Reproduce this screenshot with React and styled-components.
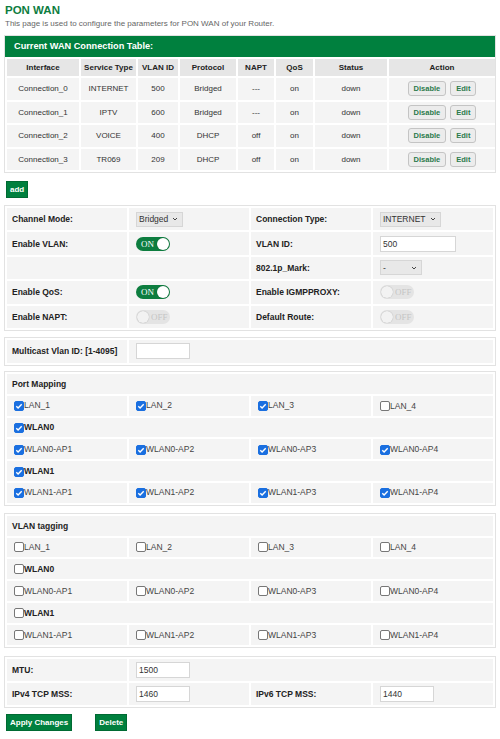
import styled, { createGlobalStyle } from "styled-components";

const GlobalStyle = createGlobalStyle`
  body {
    margin: 0;
    background: #fff;
    font-family: "Liberation Sans", Arial, sans-serif;
    color: #333;
  }
`;

const Page = styled.div`
  padding: 3px 4px 8px 4px;
`;

const Title = styled.h1`
  margin: 0 0 0 1px;
  font-size: 11.5px;
  font-weight: bold;
  color: #0d7d3f;
  line-height: 14px;
`;

const Intro = styled.p`
  margin: 1px 0 0 1px;
  font-size: 8px;
  color: #666;
  line-height: 11px;
`;

const Box = styled.div`
  border: 1px solid #e2e2e2;
  margin-top: ${(p) => p.$mt || 6}px;
`;

const BoxHead = styled.div`
  background: #00803e;
  color: #fff;
  font-weight: bold;
  font-size: 9.2px;
  height: 21px;
  line-height: 21px;
  padding-left: 9px;
`;

const Grid = styled.table`
  width: 100%;
  border-spacing: 2px;
  table-layout: fixed;
  font-size: 8px;
`;

const Th = styled.th`
  background: #e6e6e6;
  font-weight: bold;
  font-size: 8px;
  color: #222;
  height: 17px;
  padding: 0;
  width: ${(p) => p.$w}px;
`;

const Td = styled.td`
  background: #f4f4f4;
  text-align: center;
  height: 21.5px;
  padding: 0;
  color: #333;
`;

const SmallBtn = styled.button`
  font-family: "Liberation Sans", Arial, sans-serif;
  font-size: 7.5px;
  font-weight: bold;
  color: #2b7a4b;
  background: #ececec;
  border: 1px solid #c4c4c4;
  border-radius: 3px;
  height: 15px;
  padding: 0 5px;
  margin: 0 2px;
  vertical-align: middle;
`;

const GreenBtn = styled.button`
  font-family: "Liberation Sans", Arial, sans-serif;
  font-size: 8px;
  font-weight: bold;
  color: #fff;
  background: #00803e;
  border: 1px solid #006a33;
  height: 17px;
  padding: 0 3px;
  margin-right: ${(p) => p.$mr || 0}px;
`;

const BtnRow = styled.div`
  margin-top: ${(p) => p.$mt || 6}px;
  padding-left: 2px;
  display: flex;
`;

const Label = styled.td`
  background: #f4f4f4;
  font-weight: bold;
  color: #222;
  height: ${(p) => p.$h || 22.4}px;
  padding: 0 0 0 5px;
  font-size: 8.5px;
`;

const Cell = styled.td`
  background: #f4f4f4;
  height: ${(p) => p.$h || 22.4}px;
  padding: 0 0 0 7px;
  font-size: 8px;
  color: #333;
`;

const Select = styled.div`
  display: inline-flex;
  align-items: center;
  justify-content: space-between;
  gap: 4px;
  background: #e8e8e8;
  border: 1px solid #d6d6d6;
  height: 15px;
  padding: 0 4px 0 2px;
  min-width: ${(p) => p.$w || 0}px;
  box-sizing: border-box;
  font-size: 8.5px;
  color: #333;
  vertical-align: middle;
`;

const Input = styled.div`
  display: inline-block;
  box-sizing: border-box;
  background: #fff;
  border: 1px solid #d6d6d6;
  width: ${(p) => p.$w || 76}px;
  height: 16px;
  line-height: 14px;
  padding-left: 2px;
  font-size: 8.5px;
  color: #333;
  vertical-align: middle;
`;

const Toggle = styled.div`
  position: relative;
  width: 34px;
  height: 14px;
  border-radius: 7px;
  background: ${(p) => (p.$on ? "#0d7d3f" : "#e4e4e4")};
  font-family: "Liberation Serif", "Times New Roman", serif;
  font-size: 9px;
  color: ${(p) => (p.$on ? "#fff" : "#c4c4c4")};
  line-height: 14px;
  box-sizing: border-box;
  padding-left: ${(p) => (p.$on ? 5 : 15)}px;
`;

const Knob = styled.span`
  position: absolute;
  top: 1px;
  ${(p) => (p.$on ? "right: 1px;" : "left: 1px;")}
  width: 12px;
  height: 12px;
  border-radius: 50%;
  background: ${(p) => (p.$on ? "#fff" : "#f2f2f2")};
  box-shadow: 0 0 1px rgba(0, 0, 0, 0.3);
`;

const Check = styled.span`
  display: inline-flex;
  align-items: center;
  justify-content: center;
  width: 10px;
  height: 10px;
  box-sizing: border-box;
  border-radius: 2px;
  background: ${(p) => (p.$on ? "#1a6fe0" : "#fff")};
  border: 1px solid ${(p) => (p.$on ? "#1a6fe0" : "#777")};
  vertical-align: -2px;
`;

const CheckText = styled.span`
  font-size: 8.5px;
  font-weight: ${(p) => (p.$bold ? "bold" : "normal")};
  color: ${(p) => (p.$bold ? "#222" : "#444")};
`;

const Chevron = () => (
  <svg width="6" height="4" viewBox="0 0 6 4">
    <path d="M1 1l2 2 2-2" stroke="#444" strokeWidth="1" fill="none" />
  </svg>
);

const Tick = () => (
  <svg width="8" height="8" viewBox="0 0 8 8">
    <path d="M1.3 4.2l1.8 1.8 3.6-3.8" stroke="#fff" strokeWidth="1.4" fill="none" />
  </svg>
);

const Switch = ({ on }) => (
  <Toggle $on={on}>
    {on ? "ON" : "OFF"}
    <Knob $on={on} />
  </Toggle>
);

const CheckItem = ({ on, label, bold }) => (
  <>
    <Check $on={on}>{on && <Tick />}</Check>
    <CheckText $bold={bold}>{label}</CheckText>
  </>
);

const connections = [
  ["Connection_0", "INTERNET", "500", "Bridged", "---", "on", "down"],
  ["Connection_1", "IPTV", "600", "Bridged", "---", "on", "down"],
  ["Connection_2", "VOICE", "400", "DHCP", "off", "on", "down"],
  ["Connection_3", "TR069", "209", "DHCP", "off", "on", "down"],
];

const heads = [
  ["Interface", 72],
  ["Service Type", 55],
  ["VLAN ID", 40],
  ["Protocol", 56],
  ["NAPT", 36],
  ["QoS", 37],
  ["Status", 72],
  ["Action", 106],
];

const CheckGrid = ({ title, checked, mt }) => {
  const groups = [
    { items: ["LAN_1", "LAN_2", "LAN_3", "LAN_4"], on: checked.lan },
    { head: "WLAN0", items: ["WLAN0-AP1", "WLAN0-AP2", "WLAN0-AP3", "WLAN0-AP4"], on: checked.w0 },
    { head: "WLAN1", items: ["WLAN1-AP1", "WLAN1-AP2", "WLAN1-AP3", "WLAN1-AP4"], on: checked.w1 },
  ];
  const rows = [];
  groups.forEach((g) => {
    if (g.head) {
      rows.push(
        <tr key={g.head}>
          <Cell colSpan={4} $h={19.8}>
            <CheckItem on={g.on[4]} label={g.head} bold />
          </Cell>
        </tr>
      );
    }
    rows.push(
      <tr key={g.items[0]}>
        {g.items.map((it, i) => (
          <Cell key={it} $h={19.8}>
            <CheckItem on={g.on[i]} label={it} />
          </Cell>
        ))}
      </tr>
    );
  });
  return (
    <Box $mt={mt}>
      <Grid>
        <tbody>
          <tr>
            <Label colSpan={4} $h={19.8}>{title}</Label>
          </tr>
          {rows}
        </tbody>
      </Grid>
    </Box>
  );
};

export default function App() {
  return (
    <>
      <GlobalStyle />
      <Page>
        <Title>PON WAN</Title>
        <Intro>This page is used to configure the parameters for PON WAN of your Router.</Intro>

        <Box $mt={6}>
          <BoxHead>Current WAN Connection Table:</BoxHead>
          <Grid>
            <thead>
              <tr>
                {heads.map(([h, w]) => (
                  <Th key={h} $w={w}>{h}</Th>
                ))}
              </tr>
            </thead>
            <tbody>
              {connections.map((row) => (
                <tr key={row[0]}>
                  {row.map((c, i) => (
                    <Td key={i}>{c}</Td>
                  ))}
                  <Td>
                    <SmallBtn>Disable</SmallBtn>
                    <SmallBtn>Edit</SmallBtn>
                  </Td>
                </tr>
              ))}
            </tbody>
          </Grid>
        </Box>

        <BtnRow $mt={8}>
          <GreenBtn>add</GreenBtn>
        </BtnRow>

        <Box $mt={7}>
          <Grid>
            <tbody>
              <tr>
                <Label>Channel Mode:</Label>
                <Cell>
                  <Select>Bridged <Chevron /></Select>
                </Cell>
                <Label>Connection Type:</Label>
                <Cell>
                  <Select>INTERNET <Chevron /></Select>
                </Cell>
              </tr>
              <tr>
                <Label>Enable VLAN:</Label>
                <Cell><Switch on /></Cell>
                <Label>VLAN ID:</Label>
                <Cell><Input $w={76}>500</Input></Cell>
              </tr>
              <tr>
                <Label></Label>
                <Cell></Cell>
                <Label>802.1p_Mark:</Label>
                <Cell>
                  <Select $w={42}>- <Chevron /></Select>
                </Cell>
              </tr>
              <tr>
                <Label>Enable QoS:</Label>
                <Cell><Switch on /></Cell>
                <Label>Enable IGMPPROXY:</Label>
                <Cell><Switch /></Cell>
              </tr>
              <tr>
                <Label>Enable NAPT:</Label>
                <Cell><Switch /></Cell>
                <Label>Default Route:</Label>
                <Cell><Switch /></Cell>
              </tr>
            </tbody>
          </Grid>
        </Box>

        <Box $mt={6}>
          <Grid>
            <tbody>
              <tr>
                <Label $h={23}>Multicast Vlan ID: [1-4095]</Label>
                <Cell colSpan={3} $h={23}><Input $w={54} /></Cell>
              </tr>
            </tbody>
          </Grid>
        </Box>

        <CheckGrid
          mt={5}
          title="Port Mapping"
          checked={{
            lan: [true, true, true, false],
            w0: [true, true, true, true, true],
            w1: [true, true, true, true, true],
          }}
        />

        <CheckGrid
          mt={7}
          title="VLAN tagging"
          checked={{
            lan: [false, false, false, false],
            w0: [false, false, false, false, false],
            w1: [false, false, false, false, false],
          }}
        />

        <Box $mt={8}>
          <Grid>
            <tbody>
              <tr>
                <Label>MTU:</Label>
                <Cell colSpan={3}><Input $w={54}>1500</Input></Cell>
              </tr>
              <tr>
                <Label>IPv4 TCP MSS:</Label>
                <Cell><Input $w={54}>1460</Input></Cell>
                <Label>IPv6 TCP MSS:</Label>
                <Cell><Input $w={54}>1440</Input></Cell>
              </tr>
            </tbody>
          </Grid>
        </Box>

        <BtnRow $mt={6}>
          <GreenBtn $mr={23}>Apply Changes</GreenBtn>
          <GreenBtn>Delete</GreenBtn>
        </BtnRow>
      </Page>
    </>
  );
}
